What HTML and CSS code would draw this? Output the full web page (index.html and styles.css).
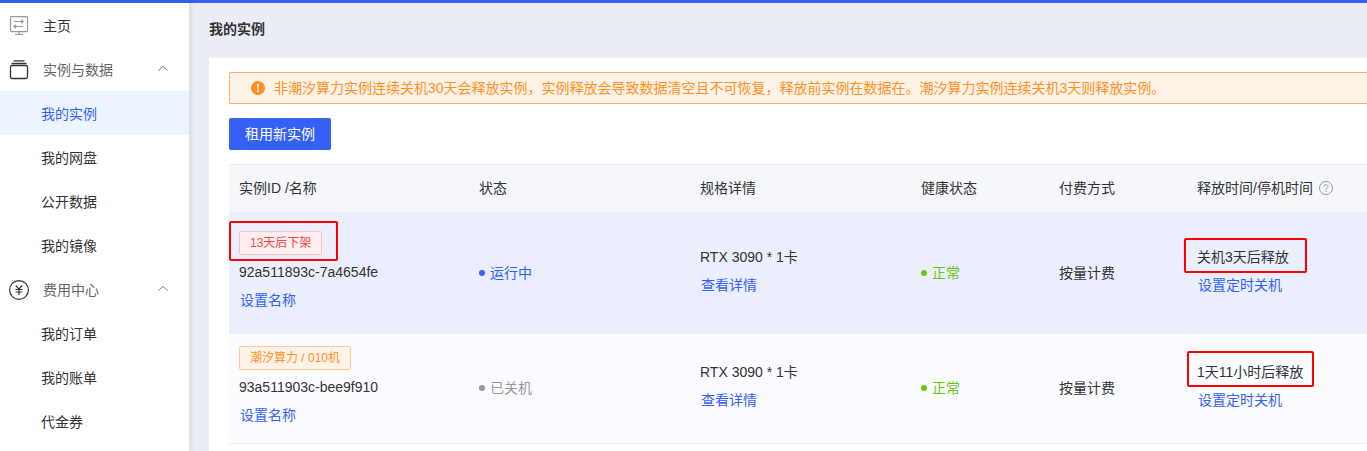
FILE: index.html
```html
<!DOCTYPE html>
<html lang="zh-CN">
<head>
<meta charset="utf-8">
<title>我的实例</title>
<link rel="stylesheet" href="styles.css">
</head>
<body>
<div class="layout">
  <nav class="sidebar">
    <a class="item" href="#">
      <svg class="icon" width="20" height="20" viewBox="0 0 20 20" fill="none" stroke="#999" stroke-width="1.2"><rect x="1.500" y=".6" width="17" height="15" rx="1"/><path d="M5 5.500h8.500M12.200 3.800 14.200 5.500l-2 1.700M14 10.500H5.500M7 8.800 5 10.500l2 1.700M10 16v2.500M6 18.500h8"/></svg>
      <span>主页</span>
    </a>
    <button class="item group" type="button" aria-expanded="true">
      <svg class="icon" width="20" height="20" viewBox="0 0 20 20" fill="none" stroke="#333" stroke-width="1.300"><rect x="1.500" y="5.500" width="17" height="13" rx="1.500"/><path d="M2.500 3.500h15M4.500 .9h11"/></svg>
      <span>实例与数据</span>
      <svg class="chevron" width="12" height="12" viewBox="0 0 12 12" fill="none" stroke="#777" stroke-width="1"><path d="M1.500 6.700 6 2.200l4.500 4.500"/></svg>
    </button>
    <a class="item sub active" href="#" aria-current="page">我的实例</a>
    <a class="item sub" href="#">我的网盘</a>
    <a class="item sub" href="#">公开数据</a>
    <a class="item sub" href="#">我的镜像</a>
    <button class="item group" type="button" aria-expanded="true">
      <svg class="icon" width="20" height="20" viewBox="0 0 20 20" fill="none" stroke="#333" stroke-width="1.200"><circle cx="10" cy="10" r="9.400"/><path d="M6.800 5.500 10 9.200l3.200-3.700M10 9.200v5.800M6.500 9.500h7M6.500 12h7"/></svg>
      <span>费用中心</span>
      <svg class="chevron" width="12" height="12" viewBox="0 0 12 12" fill="none" stroke="#777" stroke-width="1"><path d="M1.500 6.700 6 2.200l4.500 4.500"/></svg>
    </button>
    <a class="item sub" href="#">我的订单</a>
    <a class="item sub" href="#">我的账单</a>
    <a class="item sub" href="#">代金券</a>
  </nav>
  <main class="main">
    <h1 class="title">我的实例</h1>
    <section class="panel">
      <div class="alert" role="alert">
        <svg width="14" height="14" viewBox="0 0 14 14"><circle cx="7" cy="7" r="7" fill="#ff9124"/><path d="M6.100 3h1.800l-.3 5.200H6.400zM6.200 9.300h1.600v1.600H6.200z" fill="#fff"/></svg>
        <span>非潮汐算力实例连续关机30天会释放实例，实例释放会导致数据清空且不可恢复，释放前实例在数据在。潮汐算力实例连续关机3天则释放实例。</span>
      </div>
      <button class="primary" type="button">租用新实例</button>
      <table class="table">
        <colgroup><col class="c-id"><col class="c-wide"><col class="c-wide"><col class="c-narrow"><col class="c-narrow"><col></colgroup>
        <thead>
          <tr>
            <th>实例ID /名称</th><th>状态</th><th>规格详情</th><th>健康状态</th><th>付费方式</th>
            <th><div class="head-help">释放时间/停机时间
              <svg width="14" height="14" viewBox="0 0 14 14" fill="none" stroke="#999"><circle cx="7" cy="7" r="6.500"/><path d="M5 5.700c0-2.700 4-2.600 4-.2C9 7 7 7 7 8.700M7 9.800v1.200"/></svg>
            </div></th>
          </tr>
        </thead>
        <tbody>
          <tr class="row-hover">
            <td><span class="tag red mark mark-tag">13天后下架</span><div class="line">92a511893c-7a4654fe</div><a class="line link" href="#">设置名称</a></td>
            <td><span class="state running">运行中</span></td>
            <td><div class="stack"><div class="line">RTX 3090 * 1卡</div><a class="line link" href="#">查看详情</a></div></td>
            <td><span class="state ok">正常</span></td>
            <td>按量计费</td>
            <td><div class="stack"><div class="line"><span class="mark mark-days">关机3天后释放</span></div><a class="line link" href="#">设置定时关机</a></div></td>
          </tr>
          <tr class="row-off">
            <td><span class="tag orange">潮汐算力 / 010机</span><div class="line">93a511903c-bee9f910</div><a class="line link" href="#">设置名称</a></td>
            <td><span class="state off">已关机</span></td>
            <td><div class="stack"><div class="line">RTX 3090 * 1卡</div><a class="line link" href="#">查看详情</a></div></td>
            <td><span class="state ok">正常</span></td>
            <td>按量计费</td>
            <td><div class="stack"><div class="line"><span class="mark mark-hours">1天11小时后释放</span></div><a class="line link" href="#">设置定时关机</a></div></td>
          </tr>
        </tbody>
      </table>
    </section>
  </main>
</div>
</body>
</html>
```
FILE: styles.css
```css
* { box-sizing: border-box; }

body {
  margin: 0;
  background: #eaedf5;
  color: #333;
  font: 14px/20px "Liberation Sans", "Noto Sans CJK SC", sans-serif;
}

button { font: inherit; border: 0; cursor: pointer; }
a { color: inherit; text-decoration: none; }

.layout {
  display: flex;
  min-height: 100vh;
  border-top: 3px solid #3561f7;
}

/* Sidebar */
.sidebar {
  flex: 0 0 189px;
  background: #fff;
  box-shadow: 1px 0 6px rgba(0, 21, 41, 0.12);
}

.item {
  display: flex;
  align-items: center;
  width: 100%;
  height: 44px;
  padding: 2px 20px 0 9px;
  gap: 14px;
  background: none;
  text-align: left;
}

.group { color: #666; }
.sub { padding-left: 41px; }
.active { background: #ecf5ff; color: #3561f7; }
.icon { flex: none; }
.chevron { margin-left: auto; }

/* Content */
.main { flex: 1; min-width: 0; padding-left: 20px; display: flex; flex-direction: column; }

.title {
  margin: 0;
  padding: 16px 0 19px;
  font-size: 14px;
  line-height: 20px;
  font-weight: bold;
}

.panel { flex: 1; background: #fff; padding: 14px 0 0 20px; }

.alert {
  display: flex;
  align-items: center;
  gap: 9px;
  height: 32px;
  padding-left: 21px;
  border: 1px solid #ffb168;
  border-right: 0;
  border-radius: 2px 0 0 2px;
  background: #fff3e8;
  color: #ff9124;
}

.primary {
  display: block;
  margin: 14px 0;
  height: 32px;
  padding: 0 16px;
  border-radius: 2px;
  background: #3561f7;
  color: #fff;
}

/* Instance table */
.table {
  width: 100%;
  table-layout: fixed;
  border-collapse: separate;
  border-spacing: 0;
  border-top: 1px solid #e4e9f2;
}

.c-id { width: 240px; }
.c-wide { width: 221px; }
.c-narrow { width: 138px; }

th, td { padding: 0 10px; text-align: left; vertical-align: middle; white-space: nowrap; }
th { height: 47px; padding-bottom: 2px; background: #f5f7fb; font-weight: normal; }
td { border-bottom: 1px solid #e8ecf4; }
.row-hover td { height: 122px; background: #eaeefd; border-color: #e6ebfa; }
.row-off td { height: 110px; padding-bottom: 2px; background: #fbfcff; }

.head-help { display: flex; align-items: center; gap: 6px; }
.stack { padding-bottom: 4px; }
.line { display: block; line-height: 28px; }
.link { width: max-content; padding-left: 1px; color: #3561f7; }

.tag {
  display: block;
  width: max-content;
  height: 24px;
  margin-bottom: 3px;
  padding: 0 10px;
  border: 1px solid;
  border-radius: 2px;
  font-size: 12px;
  line-height: 22px;
}

.red { color: #f54a45; background: #ffeef0; border-color: #ffc0c0; }
.orange { color: #ff9124; background: #fff3e8; border-color: #ffcb94; }

.state { display: flex; align-items: center; gap: 5px; }
.state::before { content: ""; width: 6px; height: 6px; border-radius: 50%; background: currentColor; }
.running { color: #3561f7; }
.ok { color: #67c80f; }
.off { color: #999; }

/* Red callout frames drawn over the cells */
.mark { position: relative; }
span.mark:not(.tag) { display: inline-block; }
.mark::after {
  content: "";
  position: absolute;
  border: 2px solid #f00;
  border-radius: 2px;
  pointer-events: none;
}
.mark-tag::after { inset: -11px -17px -7px -11px; }
.mark-days::after { inset: -5px -18px -2px -13px; }
.mark-hours::after { inset: -7px -11px -1px -10px; }
```
